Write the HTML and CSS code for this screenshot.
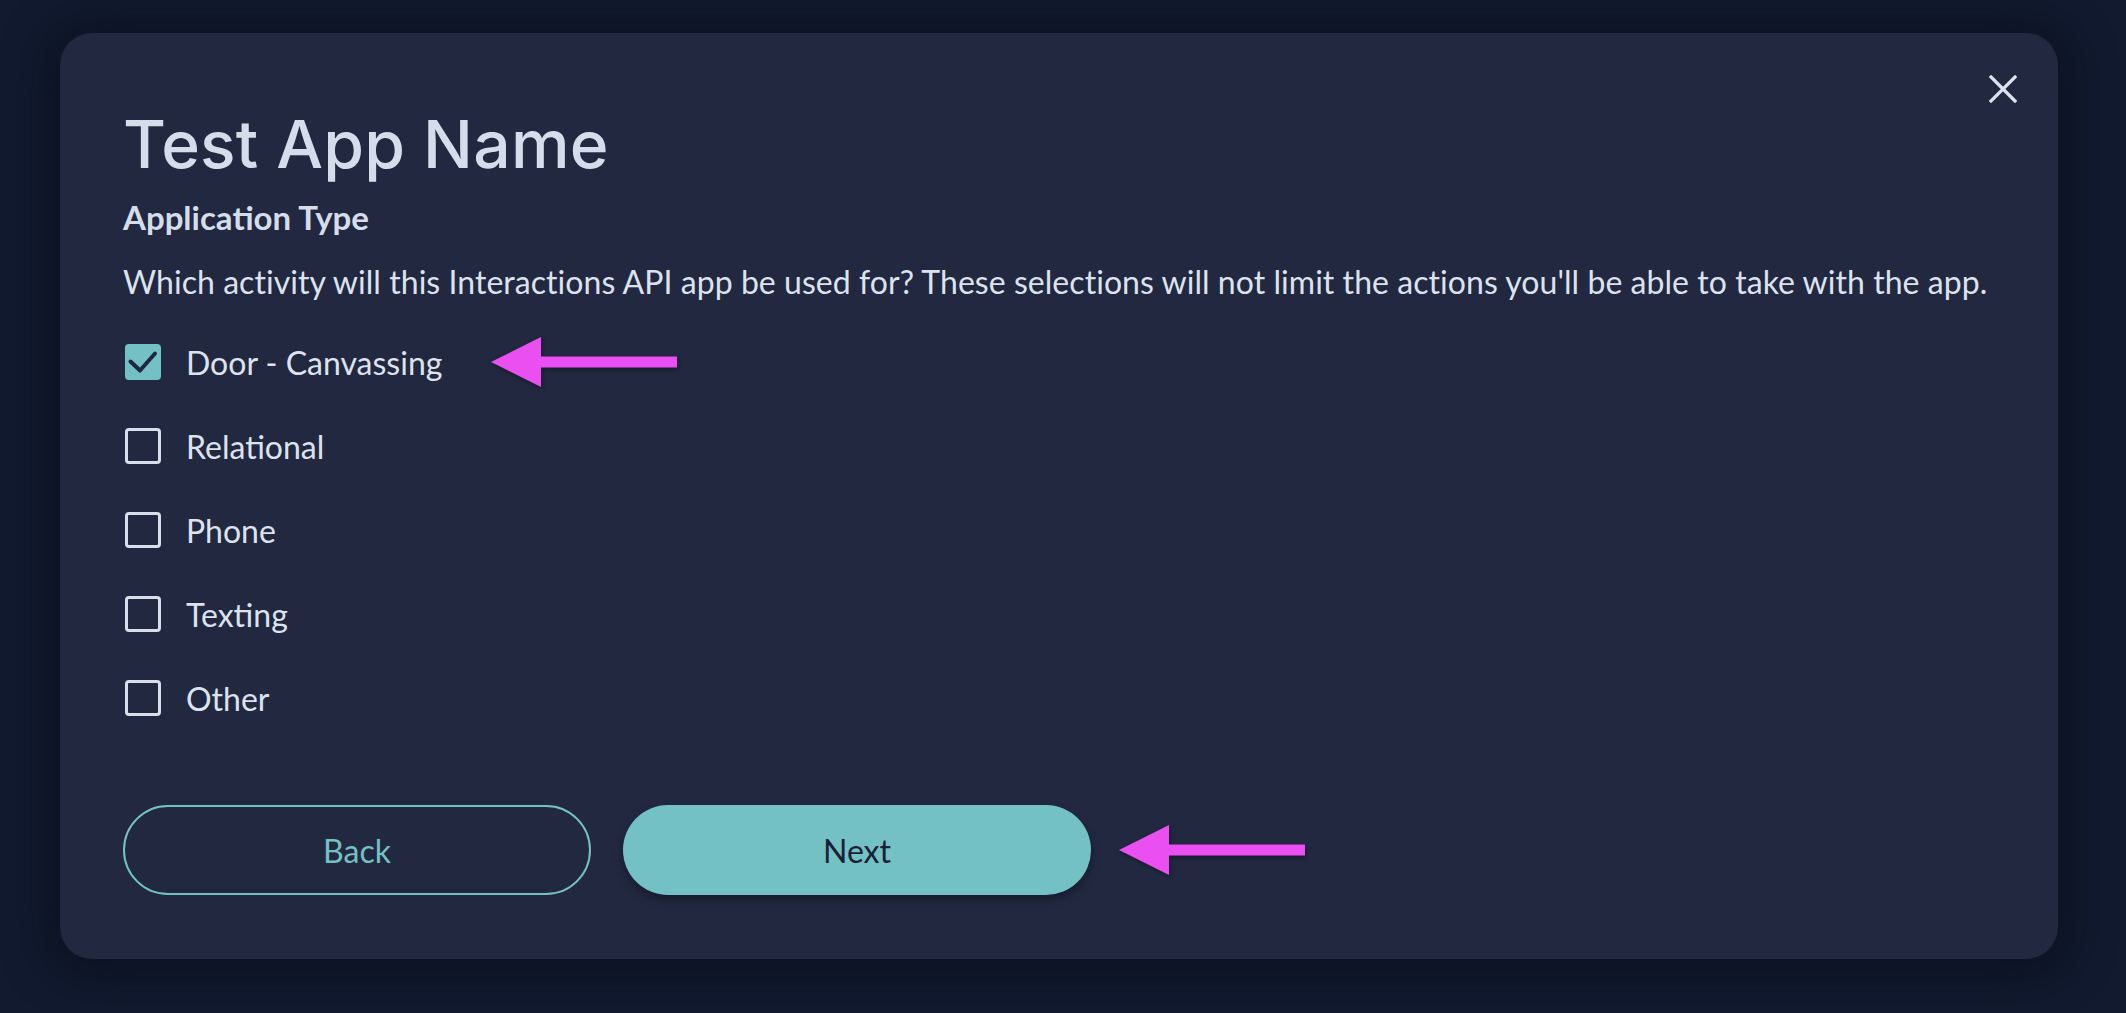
FILE: index.html
```html
<!DOCTYPE html>
<html>
<head>
<meta charset="utf-8">
<link rel="stylesheet" href="styles.css">
</head>
<body>
<div class="page">
  <div class="card">
    <button class="close" aria-label="Close">
      <svg width="28" height="28" viewBox="0 0 28 28"><path d="M2 2 L26 26 M26 2 L2 26" stroke="#dde3ee" stroke-width="3.2" stroke-linecap="square"/></svg>
    </button>
    <h1 class="title">Test App Name</h1>
    <h2 class="subtitle">Application Type</h2>
    <p class="desc">Which activity will this Interactions API app be used for? These selections will not limit the actions you'll be able to take with the app.</p>
    <div class="options">
      <label class="option">
        <span class="box checked"><svg width="36" height="36" viewBox="0 0 36 36"><path d="M5.5 17.5 L15 26.5 L30 9.5" fill="none" stroke="#1f2840" stroke-width="4" stroke-linecap="round" stroke-linejoin="round"/></svg></span>
        <span class="text">Door - Canvassing</span>
        <span class="arrow a1"><svg width="190" height="56" viewBox="0 0 190 56"><path d="M0 28 L50 3 L50 22.5 L186 22.5 L186 33.5 L50 33.5 L50 53 Z" fill="#e94ff1"/></svg></span>
      </label>
      <label class="option"><span class="box"></span><span class="text">Relational</span></label>
      <label class="option"><span class="box"></span><span class="text">Phone</span></label>
      <label class="option"><span class="box"></span><span class="text">Texting</span></label>
      <label class="option"><span class="box"></span><span class="text">Other</span></label>
    </div>
    <div class="actions">
      <button class="btn back">Back</button>
      <button class="btn next">Next</button>
      <span class="arrow a2"><svg width="190" height="56" viewBox="0 0 190 56"><path d="M0 28 L50 3 L50 22.5 L186 22.5 L186 33.5 L50 33.5 L50 53 Z" fill="#e94ff1"/></svg></span>
    </div>
  </div>
</div>
</body>
</html>
```

FILE: styles.css
```css
* { box-sizing: border-box; }
html, body {
  margin: 0;
  padding: 0;
  background: #111a2f;
  font-family: Lato, "Noto Sans", sans-serif;
}
.page {
  width: 2126px;
  height: 1013px;
  padding: 33px 68px 0 60px;
}
.card {
  position: relative;
  width: 1998px;
  height: 926px;
  background: #212840;
  border-radius: 32px;
  box-shadow: 0 4px 40px 14px rgba(8, 12, 22, 0.55);
  padding: 78px 63px 0 63px;
  display: flex;
  flex-direction: column;
}
.close {
  position: absolute;
  top: 42px;
  right: 41px;
  width: 28px;
  height: 28px;
  padding: 0;
  border: 0;
  background: none;
  display: flex;
}
.title {
  margin: 0;
  font-family: Inter, "Noto Sans", sans-serif;
  font-weight: 500;
  font-size: 66px;
  line-height: 67px;
  color: #d5ddeb;
  letter-spacing: 0.2px;
}
.subtitle {
  margin: 19px 0 0 0;
  font-family: Lato, sans-serif;
  font-weight: 700;
  font-size: 33px;
  line-height: 40px;
  color: #d5ddeb;
}
.desc {
  margin: 25px 0 0 0;
  font-size: 32px;
  line-height: 40px;
  color: #dde3ee;
  letter-spacing: 0.05px;
}
.options {
  margin-top: 40px;
  display: flex;
  flex-direction: column;
  gap: 44px;
}
.option {
  display: flex;
  align-items: center;
  height: 40px;
  gap: 25px;
  font-size: 32px;
  color: #dde3ee;
}
.box {
  width: 36px;
  height: 36px;
  border: 3px solid #d8dfea;
  border-radius: 4px;
  display: flex;
  flex: 0 0 auto;
  margin-left: 2px;
}
.box.checked {
  background: #73c1c4;
  border: 0;
}
.arrow {
  display: flex;
  filter: drop-shadow(1px 2px 2px rgba(0,0,0,0.35));
}
.a1 { margin-left: 24px; }
.actions {
  margin-top: 87px;
  display: flex;
  align-items: center;
  gap: 32px;
}
.btn {
  width: 468px;
  height: 90px;
  border-radius: 45px;
  font-family: Lato, sans-serif;
  font-size: 32px;
  cursor: pointer;
}
.back {
  background: transparent;
  border: 2px solid #74c1c4;
  color: #74c1c4;
}
.next {
  background: #73c1c4;
  border: 0;
  color: #1a2035;
  box-shadow: 0 5px 10px rgba(0,0,0,0.3);
}
.a2 { margin-left: -4px; }
```
